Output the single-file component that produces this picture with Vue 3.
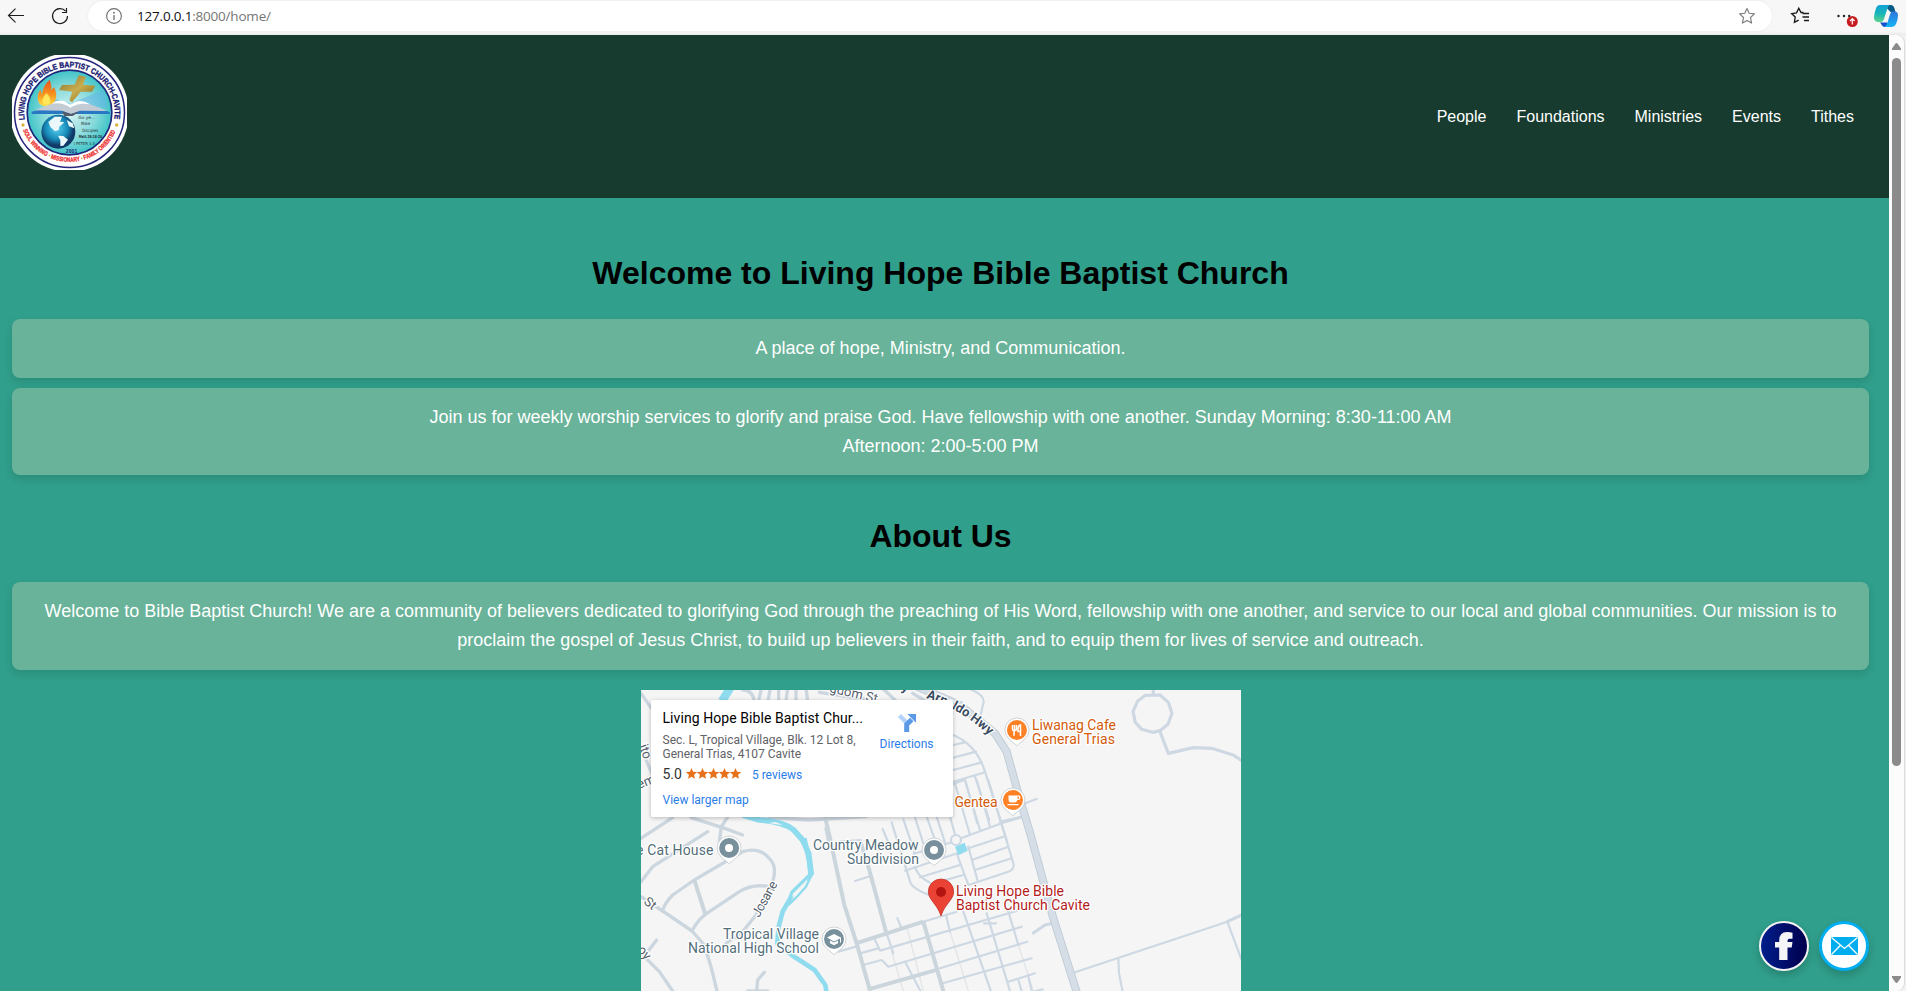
<script setup>
const links = ['People', 'Foundations', 'Ministries', 'Events', 'Tithes']
const stars = 5
const star = 'M12 1l3.200 7.400 8 .8-6 5.300 1.800 7.900L12 18.300l-7 4.100 1.800-7.900-6-5.300 8-.8z'

// Map geometry is drawn in thirds of a pixel, one list per map sheet.
const west = [
  'M15 140 L50 95 L215 -10',
  'M80 228 Q85 205 110 180 L175 135 L320 50 Q370 35 400 70 Q425 95 410 140 L360 240 L320 290 L270 325',
  'M15 185 L80 228 L168 288 L205 330 L225 395 L243 468',
  'M168 288 Q185 255 208 238 L310 170 Q350 145 400 155',
  'M62 315 L35 350', 'M20 360 L70 410 L110 468', 'M385 412 L365 435 L362 468', 'M335 468 H395'
]
const northWest = [
  'M15 460 L110 398', 'M165 398 L260 428 L320 450', 'M250 470 L256 425 L275 396',
  'M15 190 L50 270', 'M15 25 L50 75', 'M375 15 L368 48', 'M402 15 L396 48', 'M428 15 V48',
  'M455 10 L450 48', 'M480 10 V48', 'M510 10 L515 48', 'M550 22 L720 48', 'M740 10 L780 48', 'M830 25 L890 60',
  'M400 398 L520 405 L690 395', 'M570 430 L578 470', 'M320 15 Q350 15 355 48'
]
const major = [
  'M-45 110 L-32 165 L13 375 L50 490 L90 632', 'M60 180 L88 270 L138 455',
  'M48 490 L250 425', 'M250 425 L312 640', 'M85 628 L295 568'
]
const grid = [
  'M-5 515 L48 500', 'M0 185 L60 180', 'M45 303 L85 290', 'M250 425 L350 395', 'M60 520 L115 505',
  'M105 480 L120 512 L530 393', 'M70 555 L125 540 L145 560 L545 440', 'M300 565 L562 485',
  'M300 612 L575 535', 'M505 605 L585 580', 'M560 640 L608 628', 'M318 405 L330 455',
  'M370 395 L455 640', 'M440 400 L512 640', 'M505 395 L535 495', 'M172 415 L185 445',
  'M138 455 L160 520', 'M195 545 L245 640', 'M535 600 L547 640', 'M565 590 L577 640', 'M432 430 H468',
  'M340 12 L372 0', 'M345 10 L390 165', 'M375 0 L420 150', 'M410 0 L450 140',
  'M445 0 L520 250 Q525 268 505 275 L385 315 L350 220', 'M220 222 L330 188', 'M363 175 L485 130 L545 112',
  'M385 205 L490 170', 'M395 240 L505 200', 'M405 270 L515 235', 'M385 200 L412 300',
  'M128 147 L148 195', 'M155 127 L212 310 Q228 335 300 355', 'M190 118 L225 220', 'M225 112 L250 190',
  'M260 110 L285 180', 'M290 110 L315 188', 'M330 110 L345 163', 'M195 272 L345 222',
  'M225 262 Q235 290 265 305 L300 330', 'M240 292 L360 255', 'M300 305 L370 285'
]
const faint = ['M200 440 L250 633', 'M330 455 L385 633', 'M535 495 L580 633', 'M155 515 L190 633']
const northEast = [
  'M95 15 Q130 28 131 50 L122 90', 'M40 150 Q110 180 135 260 L200 465', 'M40 180 L75 172',
  'M40 218 L108 200', 'M40 255 L125 232', 'M40 290 L135 262', 'M75 285 L112 415', 'M105 275 L148 405',
  'M255 355 L290 342', 'M180 410 L245 395'
]
const outskirts = [
  'M640 10 V28', 'M660 140 L685 205 L760 188 L815 190 L880 210 L905 227',
  'M280 744 L315 720 L342 714', 'M862 710 L905 690'
]
</script>

<template>
  <div class="browser">
    <div class="toolbar">
      <svg class="tool" width="70" height="31" viewBox="0 0 70 31" fill="none" stroke="#1d1d1d" stroke-width="1.15">
        <path d="M24 15.500H8.500M15.500 8.700L8.500 15.500l7 6.800" />
        <path d="M65.700 11.200A7.500 7.500 0 1 0 67.500 16M66.500 8v4.500H62" />
      </svg>
      <div class="address">
        <svg width="18" height="18" viewBox="0 0 18 18" fill="none" stroke="#6e6e6e" stroke-width="1.100">
          <circle cx="9" cy="9" r="7.400" /><path d="M9 8v5" stroke-width="1.300" /><circle cx="9" cy="5.700" r=".4" />
        </svg>
        <span class="url"><b>127.0.0.1</b>:8000/home/</span>
        <svg class="fav" width="18" height="18" viewBox="0 0 18 18" fill="none" stroke="#7c7c7c" stroke-width="1.150" stroke-linejoin="round">
          <path d="M9 1.500l2.200 4.800 5.200.6-3.900 3.600 1.100 5.600L9 13.500l-4.600 2.600 1.100-5.600L1.600 6.900l5.200-.6z" />
        </svg>
      </div>
      <svg class="extras" width="134" height="35" viewBox="1772 0 134 35" fill="none">
        <path d="M1802.500 13h-2.500L1797.800 8.800l-2.300 4.600-4.800.7 3.500 3.500-.8 5.200 4.300-2.200M1801.500 14h6.500M1801.500 17.500h6.500M1803 21h5" transform="translate(1 -.5)" stroke="#1a1a1a" stroke-width="1.350" />
        <g fill="#222"><circle cx="1838.500" cy="16" r="1.200" /><circle cx="1844" cy="16" r="1.200" /><circle cx="1849.200" cy="16" r="1.200" /></g>
        <circle cx="1852.300" cy="21.500" r="5.500" fill="#c61e20" />
        <path d="M1852.300 24.500v-5.500M1850 21l2.300-2.300 2.300 2.300" stroke="#fff" stroke-width="1.200" />
        <defs>
          <linearGradient id="cpA" x1="0" y1="0" x2="0" y2="1"><stop offset="0" stop-color="#14a2d8" /><stop offset=".5" stop-color="#18b5b8" /><stop offset="1" stop-color="#5fd58c" /></linearGradient>
          <linearGradient id="cpB" x1="0" y1="0" x2="0" y2="1"><stop offset="0" stop-color="#2f74dc" /><stop offset="1" stop-color="#16b5f7" /></linearGradient>
        </defs>
        <path d="M1884 5h7q2.500 0 3.500 3.500l1 3.500h-5z" fill="#075c87" />
        <path d="M1880 22.500h7l3 4.500h-5q-2.500 0-3.200-2z" fill="#1550cf" />
        <path d="M1880 5h9.500q-1.500 1.500-2.300 4l-3.200 10q-1.200 3.200-4 3.200-6 0-6-4.500 0-4 2-9.500 1.300-3.200 4-3.200z" fill="url(#cpA)" />
        <path d="M1892 11.500h2.500q3.800.2 3.500 4.500-.2 4-2 8-1.400 3-4 3h-7.500q2-1.200 2.800-4l2.500-8q1-3.300 2.200-3.500z" fill="url(#cpB)" />
      </svg>
    </div>

    <div class="window">
      <main class="page">
        <header class="header">
          <svg class="logo" width="115" height="115" viewBox="36 165 345 345">
            <defs>
              <radialGradient id="sky"><stop offset="0" stop-color="#d9f3f4" /><stop offset=".6" stop-color="#8adbdc" /><stop offset="1" stop-color="#3fc3c6" /></radialGradient>
              <linearGradient id="gold" x1="0" y1="0" x2="1" y2="1"><stop offset="0" stop-color="#86702d" /><stop offset=".5" stop-color="#c9ad4e" /><stop offset="1" stop-color="#80661c" /></linearGradient>
              <linearGradient id="fire" x1="0" y1="0" x2="0" y2="1"><stop offset="0" stop-color="#e8511c" /><stop offset=".55" stop-color="#f8941e" /><stop offset="1" stop-color="#ffe34a" /></linearGradient>
              <radialGradient id="sea" cx=".45" cy=".4"><stop offset="0" stop-color="#5bd0ee" /><stop offset=".65" stop-color="#168bb9" /><stop offset="1" stop-color="#123a68" /></radialGradient>
              <path id="topArc" d="M74.200 359.500 A136 136 0 1 1 342.800 359.500" />
              <path id="lowArc" d="M69 390 A149.500 149.500 0 0 0 348 390" />
            </defs>
            <circle cx="208.500" cy="337.500" r="178" fill="#fff" />
            <circle cx="208.500" cy="337.500" r="165" fill="none" stroke="#26267f" stroke-width="4.500" />
            <circle cx="208.500" cy="337.500" r="127" fill="url(#sky)" stroke="#20277c" stroke-width="5" />
            <text class="ring" fill="#17176f" stroke="#17176f" stroke-width="1" font-size="24"><textPath href="#topArc" textLength="468" lengthAdjust="spacingAndGlyphs">LIVING HOPE BIBLE BAPTIST CHURCH-CAVITE</textPath></text>
            <text class="ring" fill="#ee2a2a" stroke="#ee2a2a" stroke-width=".8" font-size="19"><textPath href="#lowArc" textLength="355" lengthAdjust="spacingAndGlyphs">SOUL WINNING <tspan fill="#c5a83a" stroke="none">•</tspan> MISSIONARY <tspan fill="#c5a83a" stroke="none">•</tspan> FAMILY ORIENTED</textPath></text>
            <circle cx="69" cy="375" r="5" fill="#d5b43c" /><circle cx="350" cy="375" r="5" fill="#d5b43c" />
            <path d="M213 310 L120 285 L150 330z M213 310 L310 270 L325 325z" fill="#65b4e8" opacity=".55" />
            <path d="M236 226 L258 230 L249 254 L286 257 L276 275 L242 275 L216 307 L208 301 L217 275 L177 270 L186 255 L224 254z" fill="url(#gold)" />
            <path d="M149 239 Q157 262 153 270 L163 262 Q172 286 167 298 Q160 322 138 320 Q112 315 113 293 Q113 277 122 270 L126 285 Q128 257 149 239z" fill="url(#fire)" />
            <path d="M139 279 Q156 295 149 311 Q138 321 128 308 Q123 299 139 279z" fill="#ffe65a" />
            <path d="M95 335 L150 320 Q185 302 211 318 Q240 302 276 320 L330 336 L330 342 H95z" fill="#2878c4" />
            <path d="M105 331 L155 311 Q190 303 211 319 Q235 303 270 313 L322 333 L240 332 L213 342 L186 332z" fill="#c3cbd5" />
            <path d="M155 311 Q185 290 211 316 Q238 292 270 313 Q235 307 211 323 Q188 305 155 311z" fill="#fff" />
            <path d="M186 334 L213 342 L240 334 L218 348 H193z" fill="#565b67" />
            <circle cx="175" cy="395" r="51" fill="url(#sea)" />
            <path d="M145 366 L164 350 L186 350 L180 365 L193 367 L178 380 L176 390 L165 394 L151 381z M174 407 L190 408 L204 419 L190 437 L181 438 L181 421z M200 360 L218 370 L223 385 L207 379z" fill="#eaf8fc" />
            <g fill="#1c3035" font-family="'DejaVu Sans', sans-serif" font-size="13">
              <text x="235" y="357">Go ye...</text><text x="243" y="375" textLength="27" lengthAdjust="spacingAndGlyphs">Make</text><text x="247" y="395" textLength="47" lengthAdjust="spacingAndGlyphs">Disciples</text>
              <text x="236" y="413" font-weight="bold" font-size="12" textLength="70" lengthAdjust="spacingAndGlyphs">Matt.28:18-20</text>
              <text x="221" y="434" font-size="12" textLength="64" lengthAdjust="spacingAndGlyphs">I PETER 1:3</text>
            </g>
            <text class="ring" x="197" y="458" font-size="15" fill="#1a277e" textLength="35">2001</text>
          </svg>
          <nav class="nav"><a v-for="l in links" :key="l">{{ l }}</a></nav>
        </header>

        <section class="content">
          <h1>Welcome to Living Hope Bible Baptist Church</h1>
          <p class="card">A place of hope, Ministry, and Communication.</p>
          <p class="card schedule">Join us for weekly worship services to glorify and praise God. Have fellowship with one another. Sunday Morning: 8:30-11:00 AM<br />Afternoon: 2:00-5:00 PM</p>
          <h1 class="about">About Us</h1>
          <p class="card">Welcome to Bible Baptist Church! We are a community of believers dedicated to glorifying God through the preaching of His Word, fellowship with one another, and service to our local and global communities. Our mission is to<br />proclaim the gospel of Jesus Christ, to build up believers in their faith, and to equip them for lives of service and outreach.</p>

          <div class="map">
            <svg class="tiles" width="600" height="301" viewBox="641 690 600 301">
              <defs>
                <symbol id="pin" viewBox="0 0 80 96" overflow="visible">
                  <path d="M40 3a36 36 0 0 1 36 36q0 15-12 27L40 86 16 66Q4 54 4 39A36 36 0 0 1 40 3z" fill="#fff" stroke="#b9bfc4" stroke-width="2" />
                  <circle cx="40" cy="39" r="30" fill="currentColor" />
                </symbol>
              </defs>
              <g class="road" transform="translate(636 685) scale(.33333)"><path v-for="d in northWest" :key="d" :d="d" /></g>
              <g class="road" transform="translate(636 835) scale(.33333)">
                <path v-for="d in west" :key="d" :d="d" /><path class="wide" d="M175 135 L208 238" />
              </g>
              <g class="road thin" transform="translate(840 780) scale(.33333)">
                <path v-for="d in faint" :key="d" :d="d" class="faint" />
                <path v-for="d in grid" :key="d" :d="d" />
                <path v-for="d in major" :key="d" :d="d" class="wide" />
                <circle cx="348" cy="180" r="15" />
                <path d="M345 200 L374 188 L383 212 L355 226z" class="pond" />
              </g>
              <g class="road thin" transform="translate(940 685) scale(.33333)">
                <path v-for="d in northEast" :key="d" :d="d" />
                <path d="M405 862 L862 710 L905 825" /><path d="M535 822 L537 865 L548 920" />
                <g class="mid">
                  <path v-for="d in outskirts" :key="d" :d="d" />
                  <path d="M616 31 L660 30 L685 52 L696 85 L684 118 L660 137 L638 142 L605 133 L586 112 L579 80 L593 48z" />
                </g>
                <path class="hwy-edge" d="M-80 0 L60 60 L165 145 L200 200 L225 290 L245 360 L272 450 L340 700 L413 930" />
                <path class="hwy" d="M-80 0 L60 60 L165 145 L200 200 L225 290 L245 360 L272 450 L340 700 L413 930" />
              </g>
              <g class="river">
                <path transform="translate(636 685) scale(.33333)" d="M285 5 L258 48" stroke-width="25" />
                <path transform="translate(636 685) scale(.33333)" d="M320 390 L370 405 Q440 410 472 434 L500 465 L518 505 L526 570" stroke-width="17" />
                <path transform="translate(636 835) scale(.33333)" d="M505 10 L520 80 L524 120 L470 172 L462 192 L440 230 L428 275 L424 325 L470 362 L535 404 L568 450 L572 475" stroke-width="14" />
                <path transform="translate(636 835) scale(.33333)" d="M524 125 L510 155 L480 188 L458 210" stroke-width="7" />
                <path transform="translate(636 835) scale(.33333)" d="M515 132 L472 175 L467 187 L485 172 L512 142z" class="islet" />
                <path transform="translate(636 685) scale(.33333)" d="M398 414 L420 411 L440 421" class="islet" />
              </g>

              <use href="#pin" x="715.800" y="835" width="26.670" height="32" color="#78909c" /><circle cx="729" cy="848" r="4" fill="#fff" />
              <use href="#pin" x="920.700" y="837" width="26.670" height="32" color="#78909c" /><circle cx="934" cy="850" r="4" fill="#fff" />
              <use href="#pin" x="820.700" y="926" width="26.670" height="32" color="#78909c" />
              <path d="M827 937.500l7-3.500 7 3.500v5h-1v-4l-6 3z M830 940.500l4 2 4-2v2.700l-4 2-4-2z" fill="#fff" />
              <use href="#pin" x="1003.600" y="717" width="26.670" height="32" color="#ff8126" />
              <path d="M1012.500 725v4q0 1.500 1.500 1.800v5M1014.500 725v5M1016.500 725v4q0 1.500-2 1.800M1020.500 736v-11q-2.500.5-2.500 4v2.500h2.500" fill="none" stroke="#fff" stroke-width="1.500" />
              <use href="#pin" x="999.600" y="787" width="26.670" height="32" color="#ff8126" />
              <path d="M1008.500 795.500h10.500q1.300 0 1.300 1.300v1.400q0 1.800-2 1.800h-1q-.5 2.500-3 2.500h-3q-2.800 0-2.800-3z M1017.500 796.800v2h1.500v-2z M1007.500 804h11v1.300h-11z" fill="#fff" fill-rule="evenodd" />
              <path d="M941 879a12.700 12.700 0 0 1 12.700 12.700c0 8-9 12.300-12.700 24.300-3.700-12-12.700-16.300-12.700-24.300A12.700 12.700 0 0 1 941 879z" fill="#ea4335" stroke="#bf2a22" stroke-width=".7" />
              <circle cx="941" cy="892" r="5" fill="#b31412" />

              <g class="label slate">
                <text x="636" y="855" textLength="77.500">e Cat House</text>
                <text x="813" y="850" textLength="105.500">Country Meadow</text>
                <text x="847" y="864" textLength="72">Subdivision</text>
                <text x="723" y="939" textLength="96">Tropical Village</text>
                <text x="688" y="953" textLength="131">National High School</text>
              </g>
              <g class="label orange">
                <text x="1032" y="744" textLength="83">General Trias</text>
                <text x="1032" y="730" textLength="84">Liwanag Cafe</text>
                <text x="954.500" y="807" textLength="43">Gentea</text>
              </g>
              <g class="label red">
                <text x="956" y="910" textLength="134">Baptist Church Cavite</text>
                <text x="956" y="896" textLength="108">Living Hope Bible</text>
              </g>
              <g class="label street">
                <text transform="translate(759 918) rotate(-61)" textLength="39">Josane</text>
                <text transform="translate(643 903) rotate(38)">St</text>
                <text transform="translate(637 950) rotate(52)">oy</text>
                <text transform="translate(639 789) rotate(-22)">em</text>
                <text transform="translate(639 746) rotate(70)">ito</text>
                <text transform="translate(829 692) rotate(13)" textLength="49">gdom St</text>
              </g>
              <g class="label highway">
                <path id="hwyName" d="M926 698 Q962 709 994 740" fill="none" stroke="none" />
                <text><textPath href="#hwyName" textLength="74">Arnaldo Hwy</textPath></text>
                <text transform="translate(901 690) rotate(20)">y</text>
              </g>
            </svg>

            <div class="place">
              <div class="info">
                <div class="name">Living Hope Bible Baptist Chur...</div>
                <div class="addr">Sec. L, Tropical Village, Blk. 12 Lot 8,<br />General Trias, 4107 Cavite</div>
                <div class="rating">
                  <span>5.0</span>
                  <span class="stars"><svg v-for="n in stars" :key="n" width="11" height="11" viewBox="1 1 22 22" fill="#e7711b"><path :d="star" /></svg></span>
                  <a>5 reviews</a>
                </div>
                <a class="larger">View larger map</a>
              </div>
              <div class="directions">
                <svg width="20" height="20" viewBox="0 0 20 20">
                  <path d="M2.500 2.500 L10 10" stroke="#b5d3fb" stroke-width="4.500" />
                  <path d="M9.700 19v-7.500l5-5" fill="none" stroke="#5c9ae6" stroke-width="5" /><path d="M10.300 1H19v8.700z" fill="#5c9ae6" />
                </svg>
                <a>Directions</a>
              </div>
            </div>
          </div>
        </section>

        <div class="social">
          <a class="fb"><svg width="18" height="28" viewBox="0 0 18 28"><path d="M17.500.8v6h-3q-2 0-2 2V10h5l-.8 5.500h-4.200V28H4.200V15.500H0V10h4.200V8.500Q4.200 0 12 0q3 0 5.500.8z" fill="#f5f5f7" /></svg></a>
          <a class="mail"><svg width="27" height="18" viewBox="0 0 27 18"><rect width="27" height="18" fill="#00aeef" /><path d="M.5.500 L13.500 11.500 L26.500.500M.5 17.500l9-9.300M26.500 17.500l-9-9.300" fill="none" stroke="#fff" stroke-width="1.300" /></svg></a>
        </div>
      </main>
      <div class="scroll">
        <svg width="9" height="7" viewBox="0 0 9 7"><path d="M4.500 0q.7 0 1.200.8L9 5.500V7H0V5.500L3.300.8Q3.800 0 4.500 0z" fill="#8b8b8b" /></svg>
        <div class="thumb"></div>
        <svg class="down" width="9" height="7" viewBox="0 0 9 7"><path d="M4.500 7q-.7 0-1.200-.8L0 1.500V0h9v1.500L5.700 6.200Q5.200 7 4.500 7z" fill="#8b8b8b" /></svg>
      </div>
    </div>
  </div>
</template>

<style>
html, body { margin: 0; overflow: hidden; }
</style>

<style scoped>
.browser { width: 1906px; height: 991px; overflow: hidden; background: #f3f3f3; font-family: "Liberation Sans", Arial, sans-serif; }
.toolbar { height: 35px; display: flex; align-items: flex-start; background: linear-gradient(#f7f7f7 31px, #ebebeb 35px); }
.tool { flex: none; width: 70px; margin-right: 18px; }
.address { flex: 1; height: 30px; margin-top: 1px; padding: 0 16px 0 17px; box-sizing: border-box; border-radius: 15px; background: #fff; box-shadow: 0 0 2px #e2e2e2; display: flex; align-items: center; }
.url { margin-left: 14px; font: 13.500px/20px "Open Sans", "Noto Sans", sans-serif; letter-spacing: -.2px; color: #767676; }
.url b { font-weight: 400; color: #111; }
.fav { margin-left: auto; }
.extras { flex: none; }
.window { height: 956px; display: flex; }
.page { width: 1889px; height: 956px; overflow: hidden; background: #309f8b; position: relative; }
.header { height: 163px; background: #173b2f; display: flex; align-items: flex-start; justify-content: space-between; padding: 20px 35px 0 12px; box-sizing: border-box; }
.ring { font-family: "Liberation Sans", Arial, sans-serif; font-weight: bold; }
.nav { display: flex; gap: 30px; margin-top: 52px; font-size: 16px; line-height: 20px; color: #fff; }
.content { padding: 57px 20px 0 12px; display: flex; flex-direction: column; }
h1 { margin: 0 0 28px; font-size: 32px; line-height: 36px; font-weight: bold; color: #000; text-align: center; }
.about { margin-top: 33px; }
.card { margin: 0 0 10px; padding: 15px; border-radius: 8px; background: #68b399; color: #fff; font-size: 18px; line-height: 28.800px; text-align: center; white-space: nowrap; box-shadow: 0 4px 8px rgba(0, 0, 0, .12); }
.schedule { line-height: 28.200px; padding: 15.600px 15px; }
.map { align-self: center; margin-top: 10px; width: 600px; height: 301px; background: #f5f5f5; position: relative; overflow: hidden; font-family: Roboto, sans-serif; }
.tiles { display: block; }
.road { fill: none; stroke: #ccd6df; stroke-width: 10; stroke-linejoin: round; stroke-linecap: round; }
.road.thin { stroke: #cdd8e3; stroke-width: 6.500; }
.road .wide { stroke: #cbd5dc; stroke-width: 12; stroke-linecap: butt; }
.road .mid { stroke: #ced8e3; stroke-width: 9.500; }
.road .faint { stroke: #e2e4e6; stroke-width: 4; }
.road .pond { fill: #8fdcee; stroke: none; }
.road .hwy-edge { stroke: #bdc9d4; stroke-width: 24; }
.road .hwy { stroke: #d5dee6; stroke-width: 19; }
.river { fill: none; stroke: #8fdcee; stroke-linejoin: round; }
.river .islet { fill: #f4f4f4; stroke: none; }
.label { font-size: 14px; stroke: #fff; stroke-width: 2.500px; stroke-linejoin: round; paint-order: stroke; }
.slate { fill: #546e7a; }
.orange { fill: #d35b0a; }
.red { fill: #b31b1b; }
.street { fill: #54606c; font-size: 13px; }
.highway { fill: #3b4c60; font-size: 13px; font-weight: 700; }
.place { position: absolute; left: 10px; top: 10px; width: 302px; height: 117px; box-sizing: border-box; padding: 10px 19px 0 12px; background: #fff; border-radius: 2px; box-shadow: 0 1px 4px rgba(0, 0, 0, .25); display: flex; justify-content: space-between; white-space: nowrap; }
.name { font-size: 14px; line-height: 17px; font-weight: 400; letter-spacing: .07px; color: #000; }
.addr { margin-top: 6px; font-size: 12px; line-height: 14px; color: #5f6266; }
.rating { display: flex; align-items: center; height: 18px; margin-top: 4px; font-size: 14px; font-weight: 400; color: #333; }
.stars { display: flex; margin: 0 11px 0 4px; }
.place a { font-size: 12px; font-weight: 400; color: #2a7de9; }
.rating a { line-height: 14px; padding-top: 2px; }
.larger { display: block; margin-top: 10px; line-height: 14px; }
.directions { display: flex; flex-direction: column; align-items: center; padding-top: 3px; }
.directions a { margin-top: 3px; line-height: 16px; }
.social { position: absolute; right: 20px; bottom: 20px; display: flex; gap: 10px; }
.social a { width: 50px; height: 50px; box-sizing: border-box; border-radius: 50%; display: flex; align-items: center; justify-content: center; box-shadow: 0 4px 8px rgba(0, 0, 0, .2); }
.fb { border: 2px solid #f2f2f2; background: linear-gradient(90deg, #001e8c, #00004c); }
.mail { border: 3px solid #00aeef; background: #fff; }
.scroll { width: 15px; height: 956px; box-sizing: border-box; background: #fcfcfc; border-radius: 0 8px 8px 0; box-shadow: 1px 0 1px #dadada; display: flex; flex-direction: column; align-items: center; padding: 8px 0; }
.thumb { width: 9px; height: 708px; margin-top: 8px; border-radius: 5px; background: #8b8b8b; }
.down { margin-top: auto; }
</style>
